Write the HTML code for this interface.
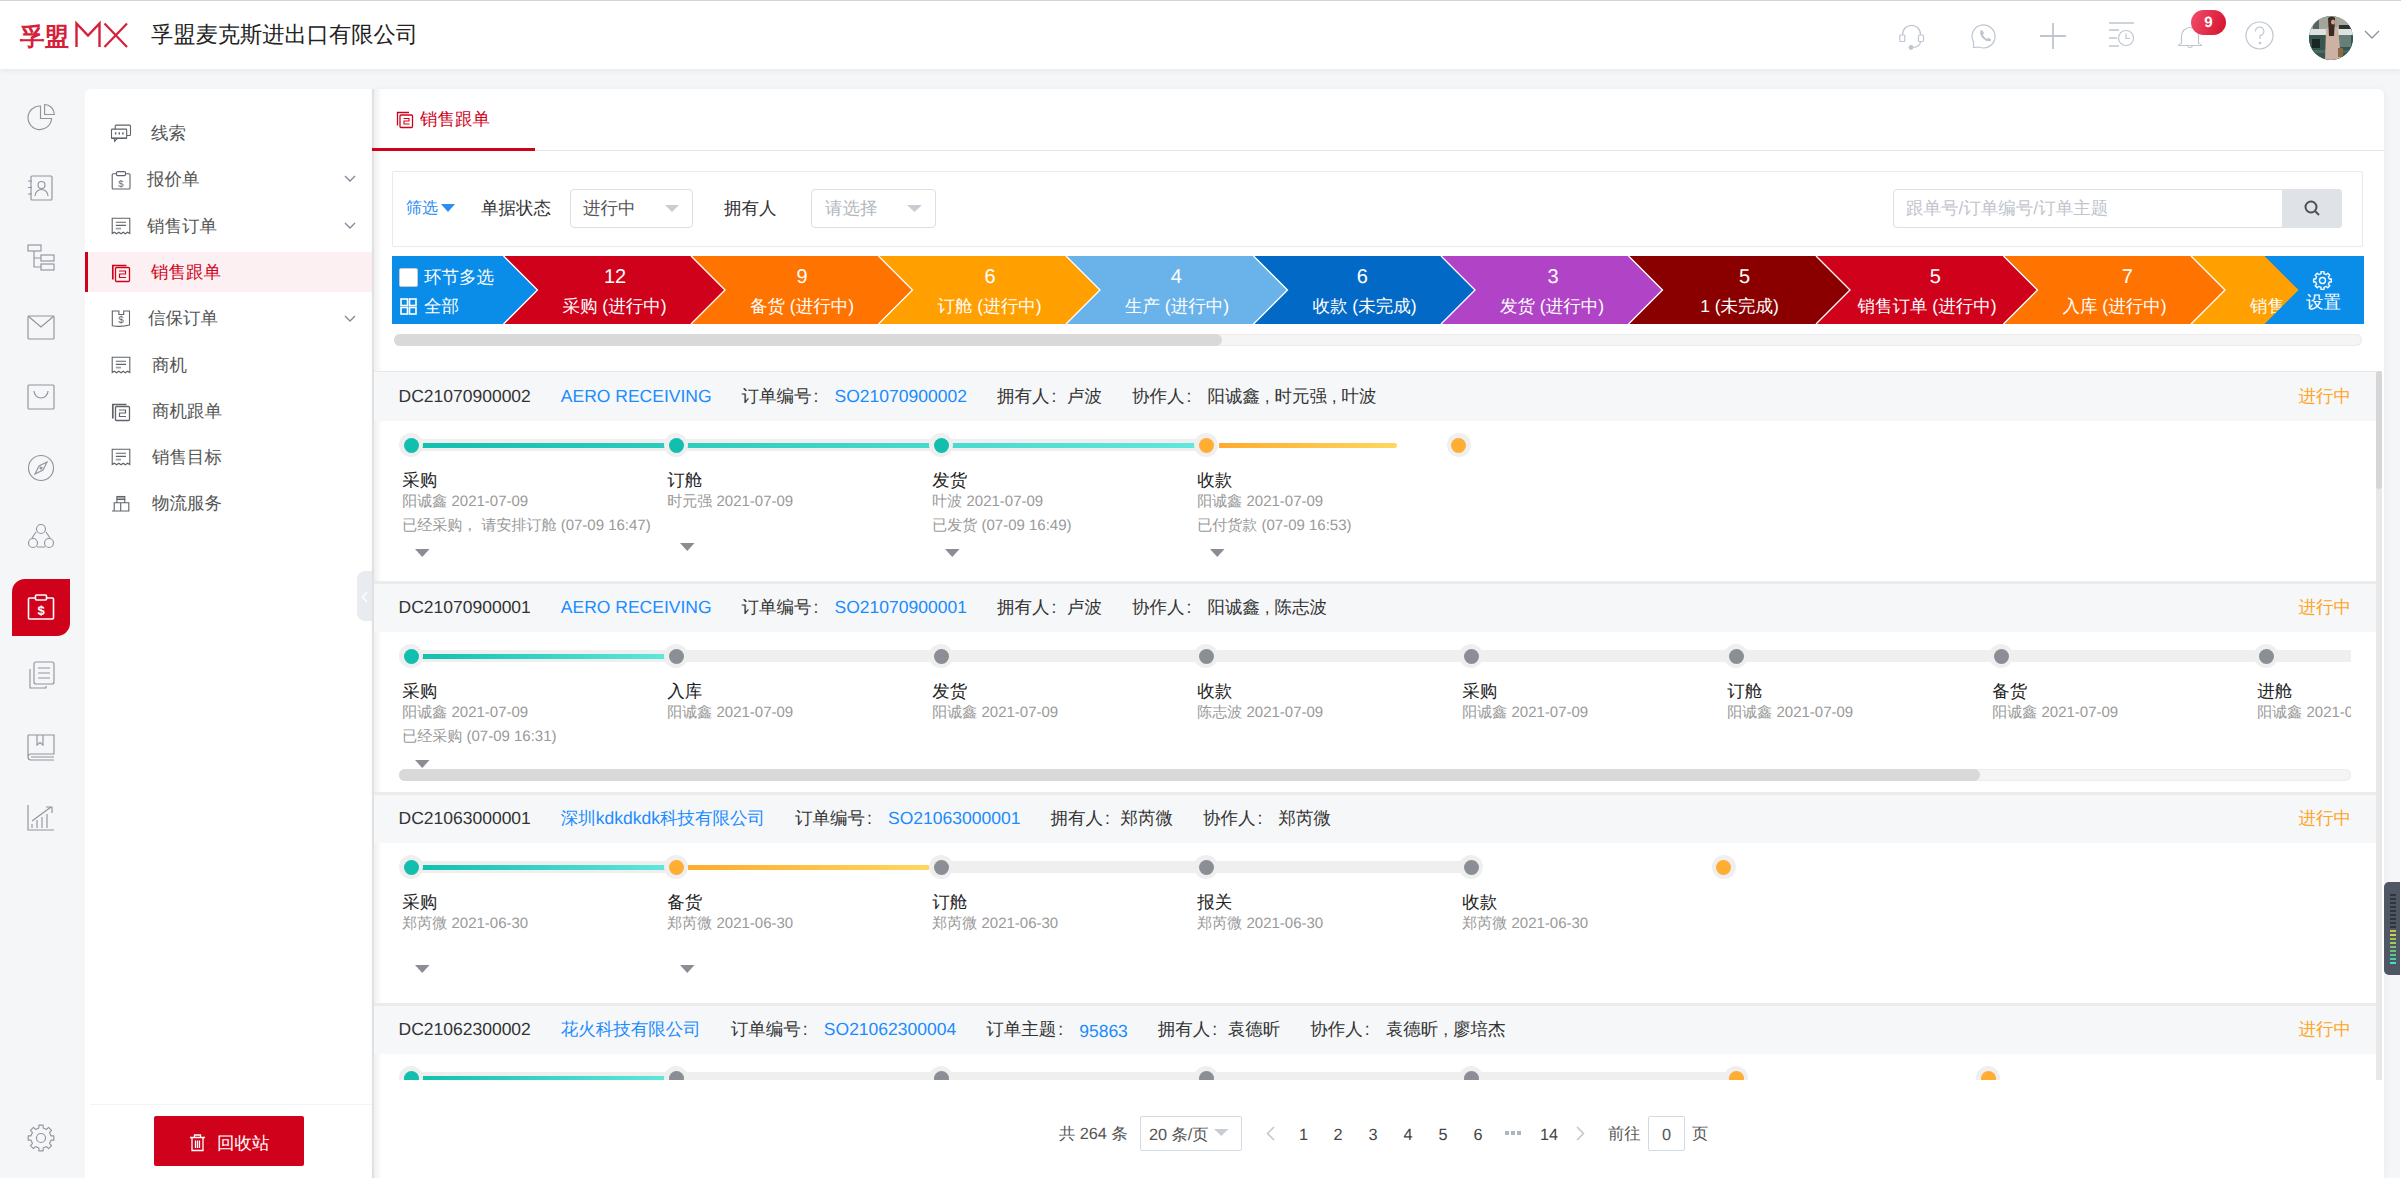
<!DOCTYPE html><html><head><meta charset="utf-8"><style>
*{box-sizing:border-box;margin:0;padding:0}
html,body{width:2401px;height:1178px;overflow:hidden}
body{position:relative;background:#f5f6f8;font-family:"Liberation Sans",sans-serif;color:#333;text-rendering:geometricPrecision}
.abs{position:absolute}
.t{position:absolute;white-space:nowrap;line-height:1}
svg{position:absolute;overflow:visible}
</style></head><body>
<div class="abs" style="left:0;top:0;width:2401px;height:69px;background:#fff;box-shadow:0 2px 6px rgba(0,0,0,0.06)"></div>
<div class="abs" style="left:0;top:0;width:2401px;height:1px;background:#d4d4d4"></div>
<svg style="left:21px;top:22px" width="107" height="26" viewBox="0 0 107 26">
<text x="-1" y="22.5" font-size="24.5" fill="#d6203a" font-family="Liberation Sans, sans-serif" font-weight="bold">孚盟</text>
<path d="M55.5 25 V1.5 L67 13.5 L78.5 1.5 V25" fill="none" stroke="#d6203a" stroke-width="2.4"/>
<path d="M83.5 1.5 L106 25 M106 1.5 L83.5 25" fill="none" stroke="#d6203a" stroke-width="2.2"/>
</svg>
<div class="t" style="left:151px;top:24px;font-size:22.25px;color:#222">孚盟麦克斯进出口有限公司</div>
<svg style="left:1899px;top:24px" width="26" height="27" viewBox="0 0 26 27" fill="none" stroke="#bfc6d1" stroke-width="1.2">
<path d="M3.5 11 C3.5 -1.8 21.5 -1.8 21.5 11"/><rect x="0.8" y="11" width="5" height="6.5" rx="1"/><rect x="19.5" y="11" width="5" height="6.5" rx="1"/>
<path d="M21.5 17.5 Q21.5 23 13 23.5"/><circle cx="12" cy="23.5" r="1.8" fill="#bfc6d1"/></svg>
<svg style="left:1972px;top:24px" width="26" height="26" viewBox="0 0 26 26" fill="none" stroke="#bfc6d1" stroke-width="1.2">
<path d="M1.5 23.5 L1.5 18 A11.5 11.5 0 1 1 7 23 Z"/>
<path d="M8.3 6.5 Q7.5 11 11 14.5 Q14.5 18 18.8 17.2 L19 15.2 L16.3 13.8 L15 15 Q12 13.5 10.8 10.8 L12 9.5 L10.8 6.5 Z" fill="#bfc6d1" stroke="none"/></svg>
<svg style="left:2039px;top:22px" width="28" height="28" viewBox="0 0 28 28" fill="none" stroke="#bfc6d1" stroke-width="1.8">
<path d="M14 1 V27 M1 14 H27"/></svg>
<svg style="left:2109px;top:22px" width="26" height="26" viewBox="0 0 26 26" fill="none" stroke="#bfc6d1" stroke-width="1.6">
<path d="M0 1 H25 M0 8 H10 M0 16 H8 M0 24 H10"/><circle cx="17" cy="16" r="7.5" stroke-width="1.2"/><path d="M17 11.5 V16.5 H21" stroke-width="1.2"/></svg>
<svg style="left:2177px;top:24px" width="26" height="26" viewBox="0 0 26 26" fill="none" stroke="#bfc6d1" stroke-width="1.2">
<path d="M4.5 19.5 V12 A8.5 8.5 0 0 1 21.5 12 V19.5 Q24 20 24.5 21.5 H1.5 Q2 20 4.5 19.5 M10.5 22 Q13 25.5 15.5 22"/></svg>
<div class="abs" style="left:2191px;top:10px;width:35px;height:25px;border-radius:13px;background:linear-gradient(110deg,#f24e6a,#d3112d)"></div>
<div class="t" style="left:2191px;top:14.5px;width:35px;text-align:center;font-size:15px;color:#fff;font-weight:bold">9</div>
<svg style="left:2245px;top:21px" width="29" height="29" viewBox="0 0 29 29" fill="none" stroke="#bfc6d1" stroke-width="1.2">
<circle cx="14.5" cy="14.5" r="13.5"/><path d="M10.5 10.5 A4.2 4.2 0 1 1 15 14.5 V18"/><circle cx="15" cy="22" r="1.3" fill="#bfc6d1" stroke="none"/></svg>
<svg style="left:2309px;top:16px" width="44" height="44" viewBox="0 0 44 44">
<defs><clipPath id="avc"><circle cx="22" cy="22" r="22"/></clipPath></defs>
<g clip-path="url(#avc)">
<rect x="0" y="0" width="44" height="44" fill="#3a5a54"/>
<rect x="0" y="0" width="44" height="13" fill="#a3a49c"/>
<rect x="4" y="2" width="6" height="11" fill="#556660"/>
<rect x="28" y="1" width="10" height="12" fill="#a8a89e"/>
<rect x="30" y="9" width="14" height="5" fill="#2a3432"/>
<rect x="0" y="13" width="44" height="6" fill="#dfe3e0"/>
<rect x="0" y="19" width="44" height="25" fill="#36554f"/>
<rect x="26" y="19" width="16" height="12" fill="#667e78"/>
<rect x="3" y="23" width="8" height="9" fill="#1a2624"/>
<rect x="0" y="34" width="44" height="3" fill="#4a6862"/>
<path d="M17 12 L29 11 L32 44 L16 44 Z" fill="#cdb2a4"/>
<path d="M19 2 Q23 -1 26 2 L25 20 L20 20 Z" fill="#3b2a22"/>
<ellipse cx="24" cy="6" rx="2" ry="2.5" fill="#d9a08e"/>
<rect x="29" y="32" width="5" height="9" fill="#8b6a48"/>
</g></svg>
<svg style="left:2364px;top:30px" width="16" height="10" viewBox="0 0 16 10" fill="none" stroke="#8d939d" stroke-width="1.4"><path d="M1 1 L8 8 L15 1"/></svg>
<svg style="left:27px;top:104px" width="28" height="28" viewBox="0 0 28 28" fill="none" stroke="#90959d" stroke-width="1.15"><path d="M13.5 2 A11.8 11.8 0 1 0 24.6 14.5 H13.5 Z"/><path d="M17.6 0.5 V10.5 H27.3 A9.8 9.8 0 0 0 17.6 0.5 Z"/></svg>
<svg style="left:27px;top:175px" width="27" height="26" viewBox="0 0 27 26" fill="none" stroke="#90959d" stroke-width="1.15"><rect x="4" y="1" width="21" height="24" rx="1"/><path d="M1 6 H5 M1 12.5 H5 M1 19 H5"/><circle cx="14.5" cy="10" r="3.5"/><path d="M8 21 A6.5 6.5 0 0 1 21 21"/></svg>
<svg style="left:27px;top:244px" width="28" height="28" viewBox="0 0 28 28" fill="none" stroke="#90959d" stroke-width="1.15"><rect x="1" y="1" width="13" height="6"/><rect x="14" y="11" width="13" height="6"/><rect x="14" y="20" width="13" height="6"/><path d="M7 7 V23 H14 M7 14 H14"/></svg>
<svg style="left:27px;top:315px" width="28" height="25" viewBox="0 0 28 25" fill="none" stroke="#90959d" stroke-width="1.15"><rect x="1" y="1" width="26" height="23" rx="1"/><path d="M1 1 L14 12 L27 1"/></svg>
<svg style="left:27px;top:384px" width="28" height="26" viewBox="0 0 28 26" fill="none" stroke="#90959d" stroke-width="1.15"><rect x="1" y="1" width="26" height="24" rx="1"/><path d="M7 7 A7 7 0 0 0 21 7"/></svg>
<svg style="left:27px;top:454px" width="28" height="28" viewBox="0 0 28 28" fill="none" stroke="#90959d" stroke-width="1.15"><circle cx="14" cy="14" r="12.5"/><path d="M20 8 L16 16 L8 20 L12 12 Z"/><circle cx="14" cy="14" r="1" fill="#8e939c"/></svg>
<svg style="left:27px;top:523px" width="28" height="27" viewBox="0 0 28 27" fill="none" stroke="#90959d" stroke-width="1.15"><circle cx="14" cy="6" r="4.5"/><circle cx="6" cy="20" r="4.5"/><circle cx="22" cy="20" r="4.5"/><path d="M9 9 L5 15 M19 9 L23 15 M10 24 H18"/></svg>
<div class="abs" style="left:12px;top:579px;width:58px;height:57px;background:#d0021b;border-radius:13px 0 13px 0"></div>
<svg style="left:27px;top:594px" width="28" height="26" viewBox="0 0 28 26" fill="none" stroke="#fff" stroke-width="1.6"><rect x="1.5" y="4" width="25" height="21" rx="1"/><rect x="8.5" y="1" width="11" height="5" rx="1" fill="#d0021b"/><text x="14" y="21" font-size="13" fill="#fff" stroke="none" text-anchor="middle" font-family="Liberation Sans, sans-serif" font-weight="bold">$</text></svg>
<svg style="left:26px;top:661px" width="30" height="30" viewBox="0 0 30 30" fill="none" stroke="#90959d" stroke-width="1.15"><rect x="8" y="1" width="20" height="22" rx="2"/><path d="M12 7 H24 M12 12 H24 M12 17 H24"/><path d="M4 8 V27 H20 V25"/></svg>
<svg style="left:27px;top:734px" width="28" height="27" viewBox="0 0 28 27" fill="none" stroke="#90959d" stroke-width="1.15"><path d="M1 1 H27 V20 H4 A3 3 0 0 0 4 26 H27 M1 1 V23 M10 1 V11 L13 8.5 L16 11 V1 M4 23 H27"/></svg>
<svg style="left:27px;top:804px" width="28" height="27" viewBox="0 0 28 27" fill="none" stroke="#90959d" stroke-width="1.15"><path d="M1 1 V26 H27 M5 24 V20 M10 24 V16 M15 24 V13 M20 24 V10 M5 17 L24 3 M19 3 H25 V9"/></svg>
<svg style="left:27px;top:1124px" width="28" height="28" viewBox="0 0 28 28" fill="none" stroke="#90959d" stroke-width="1.15"><path d="M23.97 11.85 L26.82 11.87 L26.82 16.13 L23.97 16.15 L22.57 19.53 L24.58 21.56 L21.56 24.58 L19.53 22.57 L16.15 23.97 L16.13 26.82 L11.87 26.82 L11.85 23.97 L8.47 22.57 L6.44 24.58 L3.42 21.56 L5.43 19.53 L4.03 16.15 L1.18 16.13 L1.18 11.87 L4.03 11.85 L5.43 8.47 L3.42 6.44 L6.44 3.42 L8.47 5.43 L11.85 4.03 L11.87 1.18 L16.13 1.18 L16.15 4.03 L19.53 5.43 L21.56 3.42 L24.58 6.44 L22.57 8.47 Z" stroke-linejoin="round"/><circle cx="14" cy="14" r="4.5"/></svg>
<div class="abs" style="left:85px;top:89px;width:287px;height:1089px;background:#fff;border-radius:6px 0 0 0"></div>
<div class="abs" style="left:85px;top:252px;width:287px;height:40px;background:#fcf0f2"></div>
<div class="abs" style="left:85px;top:252px;width:2.5px;height:40px;background:#d0021b"></div>
<div class="t" style="left:151px;top:124.0px;font-size:17.5px;line-height:19px;color:#555">线索</div>
<svg style="left:111px;top:124.0px" width="21" height="19" viewBox="0 0 21 19" fill="none" stroke="#5f636a" stroke-width="1.1"><rect x="4.25" y="1.1" width="15.25" height="10.4" rx="1"/><rect x="0.5" y="5.1" width="15.2" height="9.4" rx="0.8" fill="#fff"/><path d="M3.2 14.5 L3.6 17.2 L6.2 14.5" fill="#fff"/><path d="M0.5 14.2 H15.7" stroke-width="1.6"/><path d="M4.6 8.2 V10.6 M8.3 8.2 V10.6 M11.9 8.2 V10.6" stroke-width="1.4"/></svg>
<div class="t" style="left:147px;top:169.5px;font-size:17.5px;line-height:19px;color:#555">报价单</div>
<svg style="left:111px;top:170.5px" width="20" height="19" viewBox="0 0 20 19" fill="none" stroke="#5f636a" stroke-width="1.1"><rect x="1.2" y="2.8" width="17.8" height="15.2" rx="1"/><rect x="5.5" y="0.6" width="9" height="4" rx="1" fill="#fff"/><text x="10" y="15.5" font-size="9.5" fill="#5f636a" stroke="none" text-anchor="middle" font-family="Liberation Sans, sans-serif">$</text></svg>
<svg style="left:344px;top:175px" width="12" height="7" viewBox="0 0 12 7" fill="none" stroke="#7a8a9a" stroke-width="1.3"><path d="M1 1 L6 6 L11 1"/></svg>
<div class="t" style="left:147px;top:216.5px;font-size:17.5px;line-height:19px;color:#555">销售订单</div>
<svg style="left:111px;top:216.5px" width="20" height="19" viewBox="0 0 20 19" fill="none" stroke="#5f636a" stroke-width="1.1"><path d="M1.2 1.2 H18.8 V16.5 L16.6 15.2 L14.4 16.8 L12.2 15.2 L10 16.8 L7.8 15.2 L5.6 16.8 L3.4 15.2 L1.2 16.5 Z"/><path d="M4.8 5.2 H15 M4.8 8.4 H15"/><path d="M4.8 11.6 H10" stroke-width="1.8" stroke-opacity="0.6"/></svg>
<svg style="left:344px;top:222px" width="12" height="7" viewBox="0 0 12 7" fill="none" stroke="#7a8a9a" stroke-width="1.3"><path d="M1 1 L6 6 L11 1"/></svg>
<div class="t" style="left:151px;top:263.0px;font-size:17.5px;line-height:19px;color:#d0021b">销售跟单</div>
<svg style="left:111px;top:263.0px" width="20" height="20" viewBox="0 0 20 20" fill="none" stroke="#d0021b" stroke-width="1.3"><path d="M1.8 16.5 V2.5 H15.5" stroke-width="1.7"/><rect x="4.5" y="4.5" width="14" height="14" rx="1" fill="none"/><path d="M8 8 H14.5 V11 H8.5 V14.5 H15" stroke-width="1.2"/></svg>
<div class="t" style="left:148px;top:309.0px;font-size:17.5px;line-height:19px;color:#555">信保订单</div>
<svg style="left:111px;top:309.0px" width="20" height="19" viewBox="0 0 20 19" fill="none" stroke="#5f636a" stroke-width="1.1"><path d="M1.3 2 H7.9 V5.5 H12.7 V2 H18.5 V16 Q10 18.3 1.3 16.8 Z"/><text x="10" y="14" font-size="10" fill="#5f636a" stroke="none" text-anchor="middle" font-family="Liberation Sans, sans-serif">$</text></svg>
<svg style="left:344px;top:314.5px" width="12" height="7" viewBox="0 0 12 7" fill="none" stroke="#7a8a9a" stroke-width="1.3"><path d="M1 1 L6 6 L11 1"/></svg>
<div class="t" style="left:152px;top:355.5px;font-size:17.5px;line-height:19px;color:#555">商机</div>
<svg style="left:111px;top:355.5px" width="20" height="19" viewBox="0 0 20 19" fill="none" stroke="#5f636a" stroke-width="1.1"><path d="M1.2 1.2 H18.8 V16.5 L16.6 15.2 L14.4 16.8 L12.2 15.2 L10 16.8 L7.8 15.2 L5.6 16.8 L3.4 15.2 L1.2 16.5 Z"/><path d="M4.8 5.2 H15 M4.8 8.4 H15"/><path d="M4.8 11.6 H10" stroke-width="1.8" stroke-opacity="0.6"/></svg>
<div class="t" style="left:152px;top:401.5px;font-size:17.5px;line-height:19px;color:#555">商机跟单</div>
<svg style="left:111px;top:401.5px" width="20" height="20" viewBox="0 0 20 20" fill="none" stroke="#5f636a" stroke-width="1.3"><path d="M1.8 16.5 V2.5 H15.5" stroke-width="1.7"/><rect x="4.5" y="4.5" width="14" height="14" rx="1" fill="none"/><path d="M8 8 H14.5 V11 H8.5 V14.5 H15" stroke-width="1.2"/></svg>
<div class="t" style="left:152px;top:447.5px;font-size:17.5px;line-height:19px;color:#555">销售目标</div>
<svg style="left:111px;top:447.5px" width="20" height="19" viewBox="0 0 20 19" fill="none" stroke="#5f636a" stroke-width="1.1"><path d="M1.2 1.2 H18.8 V16.5 L16.6 15.2 L14.4 16.8 L12.2 15.2 L10 16.8 L7.8 15.2 L5.6 16.8 L3.4 15.2 L1.2 16.5 Z"/><path d="M4.8 5.2 H15 M4.8 8.4 H15"/><path d="M4.8 11.6 H10" stroke-width="1.8" stroke-opacity="0.6"/></svg>
<div class="t" style="left:152px;top:493.5px;font-size:17.5px;line-height:19px;color:#555">物流服务</div>
<svg style="left:111px;top:493.5px" width="20" height="19" viewBox="0 0 20 19" fill="none" stroke="#5f636a" stroke-width="1.1"><rect x="5.9" y="2.5" width="7.9" height="3" fill="#5f636a" fill-opacity="0.5"/><path d="M5.9 5.5 V8.7 M13.8 5.5 V8.7 M3.2 17 V8.7 H17.8 V17 M9.7 8.7 V17 M1 17 H18.5"/></svg>
<div class="abs" style="left:90px;top:1104px;width:282px;height:1px;background:#f4f4f4"></div>
<div class="abs" style="left:154px;top:1116px;width:150px;height:50px;background:#d0021b;border-radius:2px"></div>
<svg style="left:189px;top:1134px" width="17" height="18" viewBox="0 0 17 18" fill="none" stroke="#fff" stroke-width="1.5"><path d="M1 3.5 H16 M5.5 3.5 V1 H11.5 V3.5 M3 3.5 V16.5 H14 V3.5 M6.5 6.5 V14 M8.5 6.5 V14 M10.5 6.5 V14" stroke-width="1.3"/></svg>
<div class="t" style="left:217px;top:1133.5px;font-size:17.5px;line-height:19px;color:#fff">回收站</div>
<div class="abs" style="left:372px;top:89px;width:2012px;height:1089px;background:#fff;border-radius:0 6px 0 0;box-shadow:2px 0 6px rgba(0,0,0,0.04)"></div>
<div class="abs" style="left:372px;top:89px;width:10px;height:1089px;background:linear-gradient(90deg,rgba(0,0,0,0.08),rgba(0,0,0,0))"></div>
<div class="abs" style="left:372px;top:89px;width:2px;height:1089px;background:rgba(0,0,0,0.05)"></div>
<div class="abs" style="left:372px;top:149.5px;width:2012px;height:1px;background:#e6e8ec"></div>
<div class="abs" style="left:372px;top:148px;width:163px;height:3px;background:#d0021b"></div>
<svg style="left:396px;top:111px" width="17" height="17" viewBox="0 0 17 17" fill="none" stroke="#d0021b" stroke-width="1.3"><path d="M1.5 14.5 V1.5 H13"/><rect x="4" y="4" width="12.5" height="12.5" rx="1"/><path d="M7.5 7.5 H13 V10 H8 V13 H13.5" stroke-width="1.1"/></svg>
<div class="t" style="left:420px;top:110px;font-size:17.5px;line-height:19px;color:#d0021b">销售跟单</div>
<div class="abs" style="left:392px;top:171px;width:1971px;height:75.5px;border:1px solid #e8eaee;border-radius:2px"></div>
<div class="t" style="left:406px;top:199px;font-size:16px;line-height:19px;color:#2d8cf0">筛选</div>
<svg style="left:441px;top:204px" width="14" height="8" viewBox="0 0 14 8"><path d="M0 0 H14 L7 8 Z" fill="#2d8cf0"/></svg>
<div class="t" style="left:481px;top:199px;font-size:17.5px;line-height:19px;color:#333">单据状态</div>
<div class="abs" style="left:569.5px;top:189px;width:123.5px;height:39px;border:1px solid #dcdfe6;border-radius:4px"></div>
<div class="t" style="left:583px;top:199px;font-size:17.5px;line-height:19px;color:#555">进行中</div>
<svg style="left:665px;top:204.5px" width="14" height="7" viewBox="0 0 14 7"><path d="M0 0 H14 L7 7 Z" fill="#c8ccd4"/></svg>
<div class="t" style="left:724px;top:199px;font-size:17.5px;line-height:19px;color:#333">拥有人</div>
<div class="abs" style="left:811px;top:189px;width:124.5px;height:39px;border:1px solid #dcdfe6;border-radius:4px"></div>
<div class="t" style="left:825px;top:199px;font-size:17.5px;line-height:19px;color:#b4b8c0">请选择</div>
<svg style="left:907px;top:204.5px" width="15" height="7" viewBox="0 0 15 7"><path d="M0 0 H15 L7.5 7 Z" fill="#c8ccd4"/></svg>
<div class="abs" style="left:1892.5px;top:189px;width:449px;height:39px;border:1px solid #dcdfe6;border-radius:4px;background:#fff"></div>
<div class="abs" style="left:2282px;top:189px;width:59.5px;height:39px;background:#dfe3e8;border-radius:0 4px 4px 0"></div>
<div class="t" style="left:1906px;top:199px;font-size:17.5px;line-height:19px;color:#c0c4cc">跟单号/订单编号/订单主题</div>
<svg style="left:2304px;top:200px" width="16" height="16" viewBox="0 0 16 16" fill="none" stroke="#4a4f58" stroke-width="2"><circle cx="7" cy="7" r="5.5"/><path d="M11 11 L15 15"/></svg>
<div class="abs" style="left:0;top:0;width:2364px;height:400px;overflow:hidden">
<svg style="left:0;top:0" width="2401" height="400" viewBox="0 0 2401 400"><polygon points="392,256 503.5,256 537.5,290 503.5,324 392,324" fill="#0a8ce9"/><polygon points="503.5,256 691.0,256 725.0,290 691.0,324 503.5,324 537.5,290" fill="#d0021b"/><polygon points="691.0,256 878.5,256 912.5,290 878.5,324 691.0,324 725.0,290" fill="#ff7300"/><polygon points="878.5,256 1066.0,256 1100.0,290 1066.0,324 878.5,324 912.5,290" fill="#ffa000"/><polygon points="1066.0,256 1253.5,256 1287.5,290 1253.5,324 1066.0,324 1100.0,290" fill="#69b3ea"/><polygon points="1253.5,256 1441.0,256 1475.0,290 1441.0,324 1253.5,324 1287.5,290" fill="#0369c6"/><polygon points="1441.0,256 1628.5,256 1662.5,290 1628.5,324 1441.0,324 1475.0,290" fill="#b143c6"/><polygon points="1628.5,256 1816.0,256 1850.0,290 1816.0,324 1628.5,324 1662.5,290" fill="#8a0000"/><polygon points="1816.0,256 2003.5,256 2037.5,290 2003.5,324 1816.0,324 1850.0,290" fill="#d0021b"/><polygon points="2003.5,256 2191.0,256 2225.0,290 2191.0,324 2003.5,324 2037.5,290" fill="#ff7300"/><polygon points="2191.0,256 2378.5,256 2412.5,290 2378.5,324 2191.0,324 2225.0,290" fill="#ffa000"/><polyline points="503.5,256 537.5,290 503.5,324" fill="none" stroke="#fff" stroke-width="1.3"/><polyline points="691.0,256 725.0,290 691.0,324" fill="none" stroke="#fff" stroke-width="1.3"/><polyline points="878.5,256 912.5,290 878.5,324" fill="none" stroke="#fff" stroke-width="1.3"/><polyline points="1066.0,256 1100.0,290 1066.0,324" fill="none" stroke="#fff" stroke-width="1.3"/><polyline points="1253.5,256 1287.5,290 1253.5,324" fill="none" stroke="#fff" stroke-width="1.3"/><polyline points="1441.0,256 1475.0,290 1441.0,324" fill="none" stroke="#fff" stroke-width="1.3"/><polyline points="1628.5,256 1662.5,290 1628.5,324" fill="none" stroke="#fff" stroke-width="1.3"/><polyline points="1816.0,256 1850.0,290 1816.0,324" fill="none" stroke="#fff" stroke-width="1.3"/><polyline points="2003.5,256 2037.5,290 2003.5,324" fill="none" stroke="#fff" stroke-width="1.3"/><polyline points="2191.0,256 2225.0,290 2191.0,324" fill="none" stroke="#fff" stroke-width="1.3"/></svg>
<div class="t" style="left:555px;top:267px;width:120px;text-align:center;font-size:20px;line-height:20px;color:#fff">12</div>
<div class="t" style="left:524.5px;top:297px;width:180px;text-align:center;font-size:17.5px;line-height:19px;color:#fff;font-weight:500">采购 (进行中)</div>
<div class="t" style="left:742px;top:267px;width:120px;text-align:center;font-size:20px;line-height:20px;color:#fff">9</div>
<div class="t" style="left:712.0px;top:297px;width:180px;text-align:center;font-size:17.5px;line-height:19px;color:#fff;font-weight:500">备货 (进行中)</div>
<div class="t" style="left:930px;top:267px;width:120px;text-align:center;font-size:20px;line-height:20px;color:#fff">6</div>
<div class="t" style="left:899.5px;top:297px;width:180px;text-align:center;font-size:17.5px;line-height:19px;color:#fff;font-weight:500">订舱 (进行中)</div>
<div class="t" style="left:1116.4px;top:267px;width:120px;text-align:center;font-size:20px;line-height:20px;color:#fff">4</div>
<div class="t" style="left:1087.0px;top:297px;width:180px;text-align:center;font-size:17.5px;line-height:19px;color:#fff;font-weight:500">生产 (进行中)</div>
<div class="t" style="left:1302.2px;top:267px;width:120px;text-align:center;font-size:20px;line-height:20px;color:#fff">6</div>
<div class="t" style="left:1274.5px;top:297px;width:180px;text-align:center;font-size:17.5px;line-height:19px;color:#fff;font-weight:500">收款 (未完成)</div>
<div class="t" style="left:1493px;top:267px;width:120px;text-align:center;font-size:20px;line-height:20px;color:#fff">3</div>
<div class="t" style="left:1462.0px;top:297px;width:180px;text-align:center;font-size:17.5px;line-height:19px;color:#fff;font-weight:500">发货 (进行中)</div>
<div class="t" style="left:1684.5px;top:267px;width:120px;text-align:center;font-size:20px;line-height:20px;color:#fff">5</div>
<div class="t" style="left:1649.5px;top:297px;width:180px;text-align:center;font-size:17.5px;line-height:19px;color:#fff;font-weight:500">1 (未完成)</div>
<div class="t" style="left:1875.4px;top:267px;width:120px;text-align:center;font-size:20px;line-height:20px;color:#fff">5</div>
<div class="t" style="left:1837.0px;top:297px;width:180px;text-align:center;font-size:17.5px;line-height:19px;color:#fff;font-weight:500">销售订单 (进行中)</div>
<div class="t" style="left:2067.3px;top:267px;width:120px;text-align:center;font-size:20px;line-height:20px;color:#fff">7</div>
<div class="t" style="left:2024.5px;top:297px;width:180px;text-align:center;font-size:17.5px;line-height:19px;color:#fff;font-weight:500">入库 (进行中)</div>
<div class="t" style="left:2212.0px;top:297px;width:180px;text-align:center;font-size:17.5px;line-height:19px;color:#fff;font-weight:500">销售 (进行中)</div>
</div>
<svg style="left:0;top:0" width="2401" height="400" viewBox="0 0 2401 400"><polygon points="2264.5,256 2364,256 2364,324 2264.5,324 2298.5,290" fill="#0a8ce9"/></svg>
<svg style="left:2313px;top:271px" width="19" height="19" viewBox="0 0 19 19" fill="none" stroke="#fff" stroke-width="1.4"><circle cx="9.5" cy="9.5" r="3"/><path d="M16.34 8.03 L18.38 8.02 L18.38 10.98 L16.34 10.97 L15.38 13.30 L16.82 14.73 L14.73 16.82 L13.30 15.38 L10.97 16.34 L10.98 18.38 L8.02 18.38 L8.03 16.34 L5.70 15.38 L4.27 16.82 L2.18 14.73 L3.62 13.30 L2.66 10.97 L0.62 10.98 L0.62 8.02 L2.66 8.03 L3.62 5.70 L2.18 4.27 L4.27 2.18 L5.70 3.62 L8.03 2.66 L8.02 0.62 L10.98 0.62 L10.97 2.66 L13.30 3.62 L14.73 2.18 L16.82 4.27 L15.38 5.70 Z" stroke-linejoin="round"/></svg>
<div class="t" style="left:2306px;top:293px;font-size:17.5px;line-height:19px;color:#fff;font-weight:500">设置</div>
<div class="abs" style="left:399px;top:267.5px;width:19px;height:19px;background:#fff;border:1px solid #c9c9c9;border-radius:2px"></div>
<div class="t" style="left:424px;top:268px;font-size:17.5px;line-height:19px;color:#fff;font-weight:500">环节多选</div>
<svg style="left:400px;top:297.5px" width="17" height="17" viewBox="0 0 17 17" fill="none" stroke="#fff" stroke-width="1.6"><rect x="1" y="1" width="6.5" height="6.5"/><rect x="9.5" y="1" width="6.5" height="6.5"/><rect x="1" y="9.5" width="6.5" height="6.5"/><rect x="9.5" y="9.5" width="6.5" height="6.5"/></svg>
<div class="t" style="left:424px;top:297px;font-size:17.5px;line-height:19px;color:#fff;font-weight:500">全部</div>
<div class="abs" style="left:394px;top:334px;width:1968px;height:12px;border-radius:6px;background:#f5f5f5;box-shadow:inset 0 0 2px rgba(0,0,0,0.12)"></div>
<div class="abs" style="left:394px;top:334px;width:828px;height:12px;border-radius:6px;background:#d9d9d9"></div>
<div class="abs" style="left:374px;top:371px;width:2001.5px;height:709px;overflow:hidden">
<div class="abs" style="left:0;top:0px;width:2001.5px;height:1px;background:#e8e8e8"></div>
<div class="abs" style="left:0;top:1px;width:2001.5px;height:49px;background:#f6f7f9"></div>
<div class="t" style="left:24.5px;top:16.5px;font-size:17.5px;line-height:17.5px"><span style="color:#333;margin-left:0px;margin-right:30px">DC21070900002</span><span style="color:#1a8cff;margin-left:0px;margin-right:30px">AERO RECEIVING</span><span style="color:#333;margin-left:0px;margin-right:0px">订单编号<span style="display:inline-block;width:17.5px;padding-left:2px">:</span></span><span style="color:#1a8cff;margin-left:5.5px;margin-right:30px">SO21070900002</span><span style="color:#333;margin-left:0px;margin-right:0px">拥有人<span style="display:inline-block;width:17.5px;padding-left:2px">:</span></span><span style="color:#333;margin-left:0px;margin-right:30px">卢波</span><span style="color:#333;margin-left:0px;margin-right:0px">协作人<span style="display:inline-block;width:17.5px;padding-left:2px">:</span></span><span style="color:#333;margin-left:5.5px;margin-right:30px">阳诚鑫 , 时元强 , 叶波</span></div>
<div class="t" style="left:1924.5px;top:16.5px;font-size:17.5px;line-height:17.5px;color:#ffa51f">进行中</div>
<div class="abs" style="left:0;top:51px;width:1977px;height:150px;overflow:hidden">
<div class="abs" style="left:37px;top:17px;width:795px;height:12px;background:#efefef"></div>
<div class="abs" style="left:45px;top:20.5px;width:787px;height:5px;background:linear-gradient(90deg,#12bfae,#62e8dc)"></div>
<div class="abs" style="left:844.5px;top:20.5px;width:178.0px;height:5px;border-radius:0 3px 3px 0;background:linear-gradient(90deg,#ffab2e,#ffd75e)"></div>
<div class="abs" style="left:25.30000000000001px;top:11px;width:24px;height:24px;border-radius:50%;background:#efefef"></div>
<div class="abs" style="left:29.80000000000001px;top:15.5px;width:15px;height:15px;border-radius:50%;background:#12bfae"></div>
<div class="abs" style="left:290.29999999999995px;top:11px;width:24px;height:24px;border-radius:50%;background:#efefef"></div>
<div class="abs" style="left:294.79999999999995px;top:15.5px;width:15px;height:15px;border-radius:50%;background:#12bfae"></div>
<div class="abs" style="left:555.3px;top:11px;width:24px;height:24px;border-radius:50%;background:#efefef"></div>
<div class="abs" style="left:559.8px;top:15.5px;width:15px;height:15px;border-radius:50%;background:#12bfae"></div>
<div class="abs" style="left:820.3px;top:11px;width:24px;height:24px;border-radius:50%;background:#efefef"></div>
<div class="abs" style="left:824.8px;top:15.5px;width:15px;height:15px;border-radius:50%;background:#ffae33"></div>
<div class="abs" style="left:1072.6px;top:11px;width:24px;height:24px;border-radius:50%;background:#efefef"></div>
<div class="abs" style="left:1077.1px;top:15.5px;width:15px;height:15px;border-radius:50%;background:#ffae33"></div>
<div class="t" style="left:28.30000000000001px;top:49px;font-size:17.5px;line-height:19px;color:#222">采购</div>
<div class="t" style="left:28.30000000000001px;top:70.5px;font-size:15px;line-height:17px;color:#999">阳诚鑫 2021-07-09</div>
<div class="t" style="left:28.30000000000001px;top:94.5px;font-size:15px;line-height:17px;color:#999">已经采购， 请安排订舱 (07-09 16:47)</div>
<svg style="left:41.05000000000001px;top:127px" width="14.5" height="8" viewBox="0 0 14.5 8"><path d="M0 0 H14.5 L7.25 8 Z" fill="#8a8d93"/></svg>
<div class="t" style="left:293.29999999999995px;top:49px;font-size:17.5px;line-height:19px;color:#222">订舱</div>
<div class="t" style="left:293.29999999999995px;top:70.5px;font-size:15px;line-height:17px;color:#999">时元强 2021-07-09</div>
<svg style="left:306.04999999999995px;top:121px" width="14.5" height="8" viewBox="0 0 14.5 8"><path d="M0 0 H14.5 L7.25 8 Z" fill="#8a8d93"/></svg>
<div class="t" style="left:558.3px;top:49px;font-size:17.5px;line-height:19px;color:#222">发货</div>
<div class="t" style="left:558.3px;top:70.5px;font-size:15px;line-height:17px;color:#999">叶波 2021-07-09</div>
<div class="t" style="left:558.3px;top:94.5px;font-size:15px;line-height:17px;color:#999">已发货 (07-09 16:49)</div>
<svg style="left:571.05px;top:127px" width="14.5" height="8" viewBox="0 0 14.5 8"><path d="M0 0 H14.5 L7.25 8 Z" fill="#8a8d93"/></svg>
<div class="t" style="left:823.3px;top:49px;font-size:17.5px;line-height:19px;color:#222">收款</div>
<div class="t" style="left:823.3px;top:70.5px;font-size:15px;line-height:17px;color:#999">阳诚鑫 2021-07-09</div>
<div class="t" style="left:823.3px;top:94.5px;font-size:15px;line-height:17px;color:#999">已付货款 (07-09 16:53)</div>
<svg style="left:836.05px;top:127px" width="14.5" height="8" viewBox="0 0 14.5 8"><path d="M0 0 H14.5 L7.25 8 Z" fill="#8a8d93"/></svg>
</div>
<div class="abs" style="left:0;top:210px;width:2001.5px;height:3px;background:#ebebeb"></div>
<div class="abs" style="left:0;top:213px;width:2001.5px;height:48px;background:#f6f7f9"></div>
<div class="t" style="left:24.5px;top:227.5px;font-size:17.5px;line-height:17.5px"><span style="color:#333;margin-left:0px;margin-right:30px">DC21070900001</span><span style="color:#1a8cff;margin-left:0px;margin-right:30px">AERO RECEIVING</span><span style="color:#333;margin-left:0px;margin-right:0px">订单编号<span style="display:inline-block;width:17.5px;padding-left:2px">:</span></span><span style="color:#1a8cff;margin-left:5.5px;margin-right:30px">SO21070900001</span><span style="color:#333;margin-left:0px;margin-right:0px">拥有人<span style="display:inline-block;width:17.5px;padding-left:2px">:</span></span><span style="color:#333;margin-left:0px;margin-right:30px">卢波</span><span style="color:#333;margin-left:0px;margin-right:0px">协作人<span style="display:inline-block;width:17.5px;padding-left:2px">:</span></span><span style="color:#333;margin-left:5.5px;margin-right:30px">阳诚鑫 , 陈志波</span></div>
<div class="t" style="left:1924.5px;top:227.5px;font-size:17.5px;line-height:17.5px;color:#ffa51f">进行中</div>
<div class="abs" style="left:0;top:262px;width:1977px;height:150px;overflow:hidden">
<div class="abs" style="left:37px;top:17px;width:1940px;height:12px;background:#efefef"></div>
<div class="abs" style="left:45px;top:20.5px;width:257px;height:5px;background:linear-gradient(90deg,#12bfae,#62e8dc)"></div>
<div class="abs" style="left:25.30000000000001px;top:11px;width:24px;height:24px;border-radius:50%;background:#efefef"></div>
<div class="abs" style="left:29.80000000000001px;top:15.5px;width:15px;height:15px;border-radius:50%;background:#12bfae"></div>
<div class="abs" style="left:290.29999999999995px;top:11px;width:24px;height:24px;border-radius:50%;background:#efefef"></div>
<div class="abs" style="left:294.79999999999995px;top:15.5px;width:15px;height:15px;border-radius:50%;background:#8b8e94"></div>
<div class="abs" style="left:555.3px;top:11px;width:24px;height:24px;border-radius:50%;background:#efefef"></div>
<div class="abs" style="left:559.8px;top:15.5px;width:15px;height:15px;border-radius:50%;background:#8b8e94"></div>
<div class="abs" style="left:820.3px;top:11px;width:24px;height:24px;border-radius:50%;background:#efefef"></div>
<div class="abs" style="left:824.8px;top:15.5px;width:15px;height:15px;border-radius:50%;background:#8b8e94"></div>
<div class="abs" style="left:1085.3px;top:11px;width:24px;height:24px;border-radius:50%;background:#efefef"></div>
<div class="abs" style="left:1089.8px;top:15.5px;width:15px;height:15px;border-radius:50%;background:#8b8e94"></div>
<div class="abs" style="left:1350.3px;top:11px;width:24px;height:24px;border-radius:50%;background:#efefef"></div>
<div class="abs" style="left:1354.8px;top:15.5px;width:15px;height:15px;border-radius:50%;background:#8b8e94"></div>
<div class="abs" style="left:1615.3px;top:11px;width:24px;height:24px;border-radius:50%;background:#efefef"></div>
<div class="abs" style="left:1619.8px;top:15.5px;width:15px;height:15px;border-radius:50%;background:#8b8e94"></div>
<div class="abs" style="left:1880.3000000000002px;top:11px;width:24px;height:24px;border-radius:50%;background:#efefef"></div>
<div class="abs" style="left:1884.8000000000002px;top:15.5px;width:15px;height:15px;border-radius:50%;background:#8b8e94"></div>
<div class="t" style="left:28.30000000000001px;top:49px;font-size:17.5px;line-height:19px;color:#222">采购</div>
<div class="t" style="left:28.30000000000001px;top:70.5px;font-size:15px;line-height:17px;color:#999">阳诚鑫 2021-07-09</div>
<div class="t" style="left:28.30000000000001px;top:94.5px;font-size:15px;line-height:17px;color:#999">已经采购 (07-09 16:31)</div>
<svg style="left:41.05000000000001px;top:127px" width="14.5" height="8" viewBox="0 0 14.5 8"><path d="M0 0 H14.5 L7.25 8 Z" fill="#8a8d93"/></svg>
<div class="t" style="left:293.29999999999995px;top:49px;font-size:17.5px;line-height:19px;color:#222">入库</div>
<div class="t" style="left:293.29999999999995px;top:70.5px;font-size:15px;line-height:17px;color:#999">阳诚鑫 2021-07-09</div>
<div class="t" style="left:558.3px;top:49px;font-size:17.5px;line-height:19px;color:#222">发货</div>
<div class="t" style="left:558.3px;top:70.5px;font-size:15px;line-height:17px;color:#999">阳诚鑫 2021-07-09</div>
<div class="t" style="left:823.3px;top:49px;font-size:17.5px;line-height:19px;color:#222">收款</div>
<div class="t" style="left:823.3px;top:70.5px;font-size:15px;line-height:17px;color:#999">陈志波 2021-07-09</div>
<div class="t" style="left:1088.3px;top:49px;font-size:17.5px;line-height:19px;color:#222">采购</div>
<div class="t" style="left:1088.3px;top:70.5px;font-size:15px;line-height:17px;color:#999">阳诚鑫 2021-07-09</div>
<div class="t" style="left:1353.3px;top:49px;font-size:17.5px;line-height:19px;color:#222">订舱</div>
<div class="t" style="left:1353.3px;top:70.5px;font-size:15px;line-height:17px;color:#999">阳诚鑫 2021-07-09</div>
<div class="t" style="left:1618.3px;top:49px;font-size:17.5px;line-height:19px;color:#222">备货</div>
<div class="t" style="left:1618.3px;top:70.5px;font-size:15px;line-height:17px;color:#999">阳诚鑫 2021-07-09</div>
<div class="t" style="left:1883.3000000000002px;top:49px;font-size:17.5px;line-height:19px;color:#222">进舱</div>
<div class="t" style="left:1883.3000000000002px;top:70.5px;font-size:15px;line-height:17px;color:#999">阳诚鑫 2021-07-09</div>
</div>
<div class="abs" style="left:25px;top:398px;width:1952px;height:12px;border-radius:6px;background:#f5f5f5;box-shadow:inset 0 0 2px rgba(0,0,0,0.12)"></div>
<div class="abs" style="left:25px;top:398px;width:1581px;height:12px;border-radius:6px;background:#d9d9d9"></div>
<div class="abs" style="left:0;top:421px;width:2001.5px;height:3px;background:#ebebeb"></div>
<div class="abs" style="left:0;top:424px;width:2001.5px;height:48px;background:#f6f7f9"></div>
<div class="t" style="left:24.5px;top:438.5px;font-size:17.5px;line-height:17.5px"><span style="color:#333;margin-left:0px;margin-right:30px">DC21063000001</span><span style="color:#1a8cff;margin-left:0px;margin-right:30px">深圳kdkdkdk科技有限公司</span><span style="color:#333;margin-left:0px;margin-right:0px">订单编号<span style="display:inline-block;width:17.5px;padding-left:2px">:</span></span><span style="color:#1a8cff;margin-left:5.5px;margin-right:30px">SO21063000001</span><span style="color:#333;margin-left:0px;margin-right:0px">拥有人<span style="display:inline-block;width:17.5px;padding-left:2px">:</span></span><span style="color:#333;margin-left:0px;margin-right:30px">郑芮微</span><span style="color:#333;margin-left:0px;margin-right:0px">协作人<span style="display:inline-block;width:17.5px;padding-left:2px">:</span></span><span style="color:#333;margin-left:5.5px;margin-right:30px">郑芮微</span></div>
<div class="t" style="left:1924.5px;top:438.5px;font-size:17.5px;line-height:17.5px;color:#ffa51f">进行中</div>
<div class="abs" style="left:0;top:473px;width:1977px;height:150px;overflow:hidden">
<div class="abs" style="left:37px;top:17px;width:265px;height:12px;background:#efefef"></div>
<div class="abs" style="left:45px;top:20.5px;width:257px;height:5px;background:linear-gradient(90deg,#12bfae,#62e8dc)"></div>
<div class="abs" style="left:314px;top:20.5px;width:242px;height:5px;border-radius:0 3px 3px 0;background:linear-gradient(90deg,#ffab2e,#ffd75e)"></div>
<div class="abs" style="left:567px;top:17px;width:530px;height:12px;background:#efefef"></div>
<div class="abs" style="left:25.30000000000001px;top:11px;width:24px;height:24px;border-radius:50%;background:#efefef"></div>
<div class="abs" style="left:29.80000000000001px;top:15.5px;width:15px;height:15px;border-radius:50%;background:#12bfae"></div>
<div class="abs" style="left:290.29999999999995px;top:11px;width:24px;height:24px;border-radius:50%;background:#efefef"></div>
<div class="abs" style="left:294.79999999999995px;top:15.5px;width:15px;height:15px;border-radius:50%;background:#ffae33"></div>
<div class="abs" style="left:555.3px;top:11px;width:24px;height:24px;border-radius:50%;background:#efefef"></div>
<div class="abs" style="left:559.8px;top:15.5px;width:15px;height:15px;border-radius:50%;background:#8b8e94"></div>
<div class="abs" style="left:820.3px;top:11px;width:24px;height:24px;border-radius:50%;background:#efefef"></div>
<div class="abs" style="left:824.8px;top:15.5px;width:15px;height:15px;border-radius:50%;background:#8b8e94"></div>
<div class="abs" style="left:1085.3px;top:11px;width:24px;height:24px;border-radius:50%;background:#efefef"></div>
<div class="abs" style="left:1089.8px;top:15.5px;width:15px;height:15px;border-radius:50%;background:#8b8e94"></div>
<div class="abs" style="left:1337.5px;top:11px;width:24px;height:24px;border-radius:50%;background:#efefef"></div>
<div class="abs" style="left:1342.0px;top:15.5px;width:15px;height:15px;border-radius:50%;background:#ffae33"></div>
<div class="t" style="left:28.30000000000001px;top:49px;font-size:17.5px;line-height:19px;color:#222">采购</div>
<div class="t" style="left:28.30000000000001px;top:70.5px;font-size:15px;line-height:17px;color:#999">郑芮微 2021-06-30</div>
<svg style="left:41.05000000000001px;top:121px" width="14.5" height="8" viewBox="0 0 14.5 8"><path d="M0 0 H14.5 L7.25 8 Z" fill="#8a8d93"/></svg>
<div class="t" style="left:293.29999999999995px;top:49px;font-size:17.5px;line-height:19px;color:#222">备货</div>
<div class="t" style="left:293.29999999999995px;top:70.5px;font-size:15px;line-height:17px;color:#999">郑芮微 2021-06-30</div>
<svg style="left:306.04999999999995px;top:121px" width="14.5" height="8" viewBox="0 0 14.5 8"><path d="M0 0 H14.5 L7.25 8 Z" fill="#8a8d93"/></svg>
<div class="t" style="left:558.3px;top:49px;font-size:17.5px;line-height:19px;color:#222">订舱</div>
<div class="t" style="left:558.3px;top:70.5px;font-size:15px;line-height:17px;color:#999">郑芮微 2021-06-30</div>
<div class="t" style="left:823.3px;top:49px;font-size:17.5px;line-height:19px;color:#222">报关</div>
<div class="t" style="left:823.3px;top:70.5px;font-size:15px;line-height:17px;color:#999">郑芮微 2021-06-30</div>
<div class="t" style="left:1088.3px;top:49px;font-size:17.5px;line-height:19px;color:#222">收款</div>
<div class="t" style="left:1088.3px;top:70.5px;font-size:15px;line-height:17px;color:#999">郑芮微 2021-06-30</div>
</div>
<div class="abs" style="left:0;top:632px;width:2001.5px;height:3px;background:#ebebeb"></div>
<div class="abs" style="left:0;top:635px;width:2001.5px;height:48px;background:#f6f7f9"></div>
<div class="t" style="left:24.5px;top:649.5px;font-size:17.5px;line-height:17.5px"><span style="color:#333;margin-left:0px;margin-right:30px">DC21062300002</span><span style="color:#1a8cff;margin-left:0px;margin-right:30px">花火科技有限公司</span><span style="color:#333;margin-left:0px;margin-right:0px">订单编号<span style="display:inline-block;width:17.5px;padding-left:2px">:</span></span><span style="color:#1a8cff;margin-left:5.5px;margin-right:30px">SO21062300004</span><span style="color:#333;margin-left:0px;margin-right:0px">订单主题<span style="display:inline-block;width:17.5px;padding-left:2px">:</span></span><span style="position:relative;top:2px;color:#1a8cff;margin-left:5.5px;margin-right:30px">95863</span><span style="color:#333;margin-left:0px;margin-right:0px">拥有人<span style="display:inline-block;width:17.5px;padding-left:2px">:</span></span><span style="color:#333;margin-left:0px;margin-right:30px">袁德昕</span><span style="color:#333;margin-left:0px;margin-right:0px">协作人<span style="display:inline-block;width:17.5px;padding-left:2px">:</span></span><span style="color:#333;margin-left:5.5px;margin-right:30px">袁德昕 , 廖培杰</span></div>
<div class="t" style="left:1924.5px;top:649.5px;font-size:17.5px;line-height:17.5px;color:#ffa51f">进行中</div>
<div class="abs" style="left:0;top:684px;width:1977px;height:150px;overflow:hidden">
<div class="abs" style="left:37px;top:17px;width:1325px;height:12px;background:#efefef"></div>
<div class="abs" style="left:45px;top:20.5px;width:257px;height:5px;background:linear-gradient(90deg,#12bfae,#62e8dc)"></div>
<div class="abs" style="left:25.30000000000001px;top:11px;width:24px;height:24px;border-radius:50%;background:#efefef"></div>
<div class="abs" style="left:29.80000000000001px;top:15.5px;width:15px;height:15px;border-radius:50%;background:#12bfae"></div>
<div class="abs" style="left:290.29999999999995px;top:11px;width:24px;height:24px;border-radius:50%;background:#efefef"></div>
<div class="abs" style="left:294.79999999999995px;top:15.5px;width:15px;height:15px;border-radius:50%;background:#8b8e94"></div>
<div class="abs" style="left:555.3px;top:11px;width:24px;height:24px;border-radius:50%;background:#efefef"></div>
<div class="abs" style="left:559.8px;top:15.5px;width:15px;height:15px;border-radius:50%;background:#8b8e94"></div>
<div class="abs" style="left:820.3px;top:11px;width:24px;height:24px;border-radius:50%;background:#efefef"></div>
<div class="abs" style="left:824.8px;top:15.5px;width:15px;height:15px;border-radius:50%;background:#8b8e94"></div>
<div class="abs" style="left:1085.3px;top:11px;width:24px;height:24px;border-radius:50%;background:#efefef"></div>
<div class="abs" style="left:1089.8px;top:15.5px;width:15px;height:15px;border-radius:50%;background:#8b8e94"></div>
<div class="abs" style="left:1350.3px;top:11px;width:24px;height:24px;border-radius:50%;background:#efefef"></div>
<div class="abs" style="left:1354.8px;top:15.5px;width:15px;height:15px;border-radius:50%;background:#ffae33"></div>
<div class="abs" style="left:1602px;top:11px;width:24px;height:24px;border-radius:50%;background:#efefef"></div>
<div class="abs" style="left:1606.5px;top:15.5px;width:15px;height:15px;border-radius:50%;background:#ffae33"></div>
<div class="t" style="left:28.30000000000001px;top:49px;font-size:17.5px;line-height:19px;color:#222">采购</div>
</div>
</div>
<div class="abs" style="left:2375.5px;top:371px;width:6.5px;height:709px;background:#e8e8e8"></div>
<div class="abs" style="left:2376px;top:371px;width:5.5px;height:118px;border-radius:3px;background:#d6d6d6"></div>
<div class="abs" style="left:357px;top:571px;width:15px;height:50px;border-radius:8px 0 0 8px;background:#e8ebef"></div>
<svg style="left:361px;top:591px" width="8" height="12" viewBox="0 0 8 12" fill="none" stroke="#fff" stroke-width="1.4"><path d="M6 1 L1.5 6 L6 11"/></svg>
<div class="t" style="left:1059px;top:1125.5px;font-size:16.25px;line-height:17px;color:#555">共 264 条</div>
<div class="abs" style="left:1140px;top:1116px;width:101.5px;height:34.5px;border:1px solid #d4dae3;border-radius:2px"></div>
<div class="t" style="left:1149px;top:1126.5px;font-size:16.25px;line-height:17px;color:#555">20 条/页</div>
<svg style="left:1214px;top:1129px" width="14.5" height="7" viewBox="0 0 14.5 7"><path d="M0 0 H14.5 L7.25 7 Z" fill="#c8ccd4"/></svg>
<svg style="left:1266px;top:1125.5px" width="9" height="15" viewBox="0 0 9 15" fill="none" stroke="#c0c4cc" stroke-width="1.5"><path d="M8 1 L1.5 7.5 L8 14"/></svg>
<div class="t" style="left:1299px;top:1126.5px;font-size:16.25px;line-height:17px;color:#444">1</div>
<div class="t" style="left:1333.5px;top:1126.5px;font-size:16.25px;line-height:17px;color:#444">2</div>
<div class="t" style="left:1368.5px;top:1126.5px;font-size:16.25px;line-height:17px;color:#444">3</div>
<div class="t" style="left:1403.5px;top:1126.5px;font-size:16.25px;line-height:17px;color:#444">4</div>
<div class="t" style="left:1438.5px;top:1126.5px;font-size:16.25px;line-height:17px;color:#444">5</div>
<div class="t" style="left:1473.5px;top:1126.5px;font-size:16.25px;line-height:17px;color:#444">6</div>
<div class="t" style="left:1540px;top:1126.5px;font-size:16.25px;line-height:17px;color:#444">14</div>
<div class="abs" style="left:1505px;top:1131px;width:4px;height:4px;background:#b0b4bc"></div>
<div class="abs" style="left:1511px;top:1131px;width:4px;height:4px;background:#b0b4bc"></div>
<div class="abs" style="left:1517px;top:1131px;width:4px;height:4px;background:#b0b4bc"></div>
<svg style="left:1576px;top:1125.5px" width="9" height="15" viewBox="0 0 9 15" fill="none" stroke="#c0c4cc" stroke-width="1.5"><path d="M1 1 L7.5 7.5 L1 14"/></svg>
<div class="t" style="left:1608px;top:1125.5px;font-size:16.25px;line-height:17px;color:#555">前往</div>
<div class="abs" style="left:1647.5px;top:1116px;width:37px;height:34.5px;border:1px solid #d4dae3;border-radius:2px"></div>
<div class="t" style="left:1662px;top:1126.5px;font-size:16.25px;line-height:17px;color:#555">0</div>
<div class="t" style="left:1692px;top:1125.5px;font-size:16.25px;line-height:17px;color:#555">页</div>
<div class="abs" style="left:2400px;top:69px;width:1px;height:1109px;background:#fff"></div>
<div class="abs" style="left:2384px;top:882px;width:16px;height:93px;border-radius:5px 0 0 5px;background:#4f5664"></div>
<div class="abs" style="left:2390px;top:894px;width:6px;height:2.2px;background:#2f343d"></div>
<div class="abs" style="left:2390px;top:898px;width:6px;height:2.2px;background:#2f343d"></div>
<div class="abs" style="left:2390px;top:902px;width:6px;height:2.2px;background:#2f343d"></div>
<div class="abs" style="left:2390px;top:906px;width:6px;height:2.2px;background:#2f343d"></div>
<div class="abs" style="left:2390px;top:910px;width:6px;height:2.2px;background:#2f343d"></div>
<div class="abs" style="left:2390px;top:914px;width:6px;height:2.2px;background:#2f343d"></div>
<div class="abs" style="left:2390px;top:918px;width:6px;height:2.2px;background:#2f343d"></div>
<div class="abs" style="left:2390px;top:922px;width:6px;height:2.2px;background:#2f343d"></div>
<div class="abs" style="left:2390px;top:926px;width:6px;height:2.2px;background:#2f343d"></div>
<div class="abs" style="left:2390px;top:930px;width:6px;height:2.2px;background:#c8c04a"></div>
<div class="abs" style="left:2390px;top:934px;width:6px;height:2.2px;background:#d4d050"></div>
<div class="abs" style="left:2390px;top:938px;width:6px;height:2.2px;background:#a8c050"></div>
<div class="abs" style="left:2390px;top:942px;width:6px;height:2.2px;background:#9ccc5a"></div>
<div class="abs" style="left:2390px;top:946px;width:6px;height:2.2px;background:#80c070"></div>
<div class="abs" style="left:2390px;top:950px;width:6px;height:2.2px;background:#6cc080"></div>
<div class="abs" style="left:2390px;top:954px;width:6px;height:2.2px;background:#58c890"></div>
<div class="abs" style="left:2390px;top:958px;width:6px;height:2.2px;background:#48d0a8"></div>
<div class="abs" style="left:2390px;top:962px;width:6px;height:2.2px;background:#40e0c0"></div>
</body></html>
